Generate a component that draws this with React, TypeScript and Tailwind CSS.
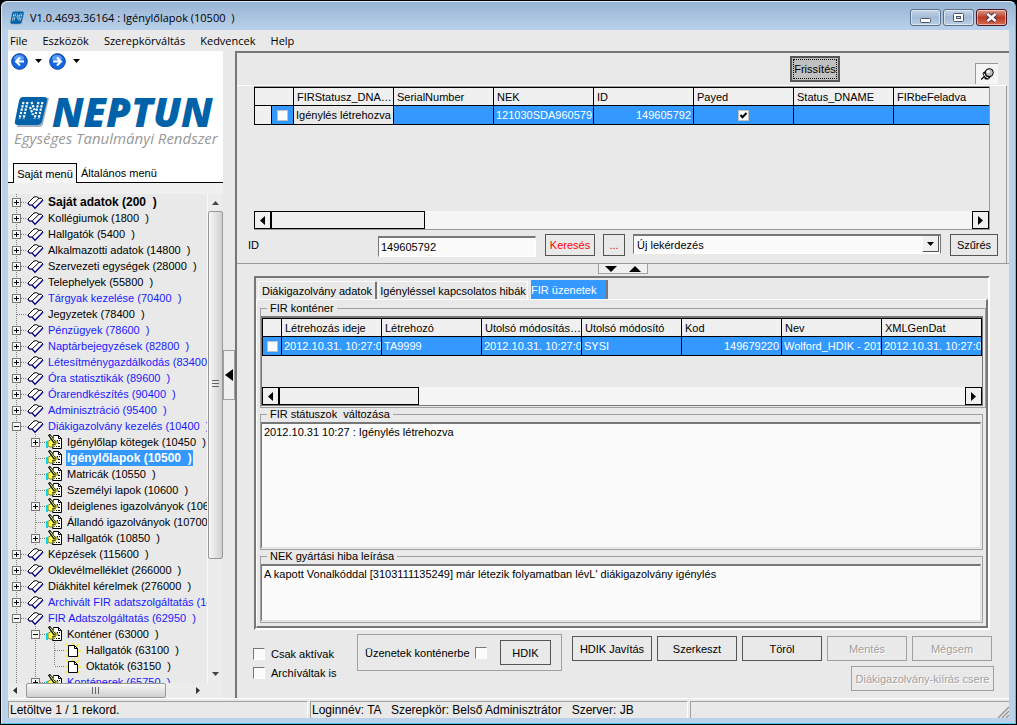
import React from 'react';
import { clsx } from 'clsx';

type Guide = 'line' | 'plus' | 'minus' | 'tee' | 'ell';
type NodeIcon = 'book' | 'form' | 'page';

interface TreeNode {
  guides: Guide[];
  icon: NodeIcon;
  label: string;
  blue?: boolean;
  bold?: boolean;
  selected?: boolean;
}

const TREE: TreeNode[] = [
  { guides: ['plus'], icon: 'book', label: 'Saját adatok (200  )', bold: true },
  { guides: ['plus'], icon: 'book', label: 'Kollégiumok (1800  )' },
  { guides: ['plus'], icon: 'book', label: 'Hallgatók (5400  )' },
  { guides: ['plus'], icon: 'book', label: 'Alkalmazotti adatok (14800  )' },
  { guides: ['plus'], icon: 'book', label: 'Szervezeti egységek (28000  )' },
  { guides: ['plus'], icon: 'book', label: 'Telephelyek (55800  )' },
  { guides: ['plus'], icon: 'book', label: 'Tárgyak kezelése (70400  )', blue: true },
  { guides: ['tee'], icon: 'book', label: 'Jegyzetek (78400  )' },
  { guides: ['plus'], icon: 'book', label: 'Pénzügyek (78600  )', blue: true },
  { guides: ['plus'], icon: 'book', label: 'Naptárbejegyzések (82800  )', blue: true },
  { guides: ['plus'], icon: 'book', label: 'Létesítménygazdálkodás (83400', blue: true },
  { guides: ['plus'], icon: 'book', label: 'Óra statisztikák (89600  )', blue: true },
  { guides: ['plus'], icon: 'book', label: 'Órarendkészítés (90400  )', blue: true },
  { guides: ['plus'], icon: 'book', label: 'Adminisztráció (95400  )', blue: true },
  { guides: ['minus'], icon: 'book', label: 'Diákigazolvány kezelés (10400  )', blue: true },
  { guides: ['line', 'plus'], icon: 'form', label: 'Igénylőlap kötegek (10450  )' },
  { guides: ['line', 'tee'], icon: 'form', label: 'Igénylőlapok (10500  )', bold: true, selected: true },
  { guides: ['line', 'tee'], icon: 'form', label: 'Matricák (10550  )' },
  { guides: ['line', 'tee'], icon: 'form', label: 'Személyi lapok (10600  )' },
  { guides: ['line', 'plus'], icon: 'form', label: 'Ideiglenes igazolványok (10650  )' },
  { guides: ['line', 'tee'], icon: 'form', label: 'Állandó igazolványok (10700' },
  { guides: ['line', 'plus'], icon: 'form', label: 'Hallgatók (10850  )' },
  { guides: ['plus'], icon: 'book', label: 'Képzések (115600  )' },
  { guides: ['plus'], icon: 'book', label: 'Oklevélmelléklet (266000  )' },
  { guides: ['plus'], icon: 'book', label: 'Diákhitel kérelmek (276000  )' },
  { guides: ['plus'], icon: 'book', label: 'Archivált FIR adatszolgáltatás (14', blue: true },
  { guides: ['minus'], icon: 'book', label: 'FIR Adatszolgáltatás (62950  )', blue: true },
  { guides: ['line', 'minus'], icon: 'form', label: 'Konténer (63000  )' },
  { guides: ['line', 'line', 'tee'], icon: 'page', label: 'Hallgatók (63100  )' },
  { guides: ['line', 'line', 'ell'], icon: 'page', label: 'Oktatók (63150  )' },
  { guides: ['line', 'plus'], icon: 'form', label: 'Konténerek (65750  )', blue: true },
];

export default function App() {
  return (
    <div className="h-screen min-h-[640px] bg-black p-px font-['Liberation_Sans',Arial,sans-serif] text-[11px] leading-4 text-black">
      <div className="flex h-full flex-col rounded-t-md border border-[#4cc5e6] border-t-[#dce9f5] border-l-[#dce9f5] bg-[#b9d1ea] pb-[5px]">
        <TitleBar />
        <div className="mx-[6px] flex min-h-0 flex-1 flex-col bg-[#e9e9e9]">
          <MenuBar />
          <div className="flex min-h-0 flex-1">
            <Sidebar />
            <div className="flex w-3 shrink-0 items-center">
              <button type="button" aria-label="Panel elrejtése" className="flex h-[50px] w-3 items-center justify-center border border-[#a0a0a0] bg-[#f0f0f0]">
                <svg width="8" height="12" viewBox="0 0 8 12"><path d="M8 0v12L0 6z" /></svg>
              </button>
            </div>
            <Workspace />
          </div>
          <StatusBar />
        </div>
      </div>
    </div>
  );
}

function TitleBar() {
  return (
    <header className="flex h-7 shrink-0 items-center rounded-t-md bg-gradient-to-b from-[#98b4d4] to-[#b9d1ea] pt-[3px] pr-2 pl-2">
      <LogoMark className="h-[14px] w-[15px]" />
      <h1 className="ml-[5px] font-['Open_Sans',sans-serif] text-[11px] whitespace-pre">V1.0.4693.36164 : Igénylőlapok (10500  )</h1>
      <div className="ml-auto flex gap-[2px]">
        <WindowButton label="Kis méret">
          <rect x="9.5" y="8.5" width="10" height="4" rx="1" fill="#fff" stroke="#4b5566" />
        </WindowButton>
        <WindowButton label="Teljes méret">
          <rect x="9.5" y="3.5" width="10" height="8" rx="1" fill="#fff" stroke="#4b5566" />
          <rect x="12.5" y="6.5" width="4" height="2" fill="#b9d1ea" stroke="#4b5566" />
        </WindowButton>
        <WindowButton label="Bezárás" close>
          <path d="M10.5 4l8 7m0-7l-8 7" stroke="#4b2a35" strokeWidth="4.5" />
          <path d="M10.5 4l8 7m0-7l-8 7" stroke="#fff" strokeWidth="2.6" />
        </WindowButton>
      </div>
    </header>
  );
}

function WindowButton({ label, close, children }: { label: string; close?: boolean; children: React.ReactNode }) {
  return (
    <button
      type="button"
      aria-label={label}
      className={clsx(
        'h-[17px] w-[31px] rounded-[3px] border shadow-[inset_0_0_0_1px_rgba(255,255,255,0.5)]',
        close
          ? 'border-[#4a1420] bg-gradient-to-b from-[#dc9a8c] via-[#b83a24] to-[#d46a50]'
          : 'border-[#5d6f86] bg-gradient-to-b from-[#c3d4e8] via-[#a4bbd6] to-[#bcd0e6]',
      )}
    >
      <svg width="29" height="15" viewBox="0 0 29 15" fill="none">{children}</svg>
    </button>
  );
}

function MenuBar() {
  return (
    <nav className="flex h-[21px] shrink-0 items-center gap-[15px] pl-[2px] font-['Open_Sans',sans-serif] text-[11px]">
      {['File', 'Eszközök', 'Szerepkörváltás', 'Kedvencek', 'Help'].map((item) => (
        <button type="button" key={item}>{item}</button>
      ))}
    </nav>
  );
}

/* ---------- left side ---------- */

function Sidebar() {
  return (
    <aside className="flex w-[215px] shrink-0 flex-col bg-[#f0f0f0]">
      <div className="bg-white">
        <div className="flex h-5 items-center pl-[3px]">
          <NavButton label="Vissza" arrow="M9 4.5L5 8.5l4 4M5 8.5h8" />
          <NavButton label="Előre" arrow="M8 4.5l4 4-4 4M12 8.5H4" />
        </div>
        <div className="pt-[23px] pl-[6px]">
          <div className="flex h-9 items-center">
            <LogoMark className="h-8 w-9" />
            <span className="ml-[2px] font-['Open_Sans',sans-serif] text-[40px] leading-9 font-extrabold text-[#0062a8] italic">NEPTUN</span>
          </div>
          <p className="font-['Open_Sans',sans-serif] text-[15px] leading-4 whitespace-nowrap text-[#999] italic">Egységes Tanulmányi Rendszer</p>
        </div>
        <div role="tablist" className="mt-[17px] flex h-5 items-end">
          <span className="w-[5px] border-b border-black" />
          <button type="button" role="tab" aria-selected="true" className="h-5 w-16 border border-b-0 border-black bg-[#f5f5f5]">Saját menü</button>
          <button type="button" role="tab" aria-selected="false" className="h-5 flex-1 border-b border-black pl-1 text-left">Általános menü</button>
        </div>
      </div>
      <div className="mt-[11px] flex min-h-0 flex-1 bg-[#e9e9e9]">
        <ul className="min-w-0 flex-1 overflow-hidden">
          {TREE.map((node) => (
            <TreeRow key={node.label} node={node} />
          ))}
        </ul>
        <div className="flex w-4 shrink-0 flex-col items-center border-l border-[#f8f8f8] bg-[#ececec]">
          <svg width="7" height="17" viewBox="0 0 7 17"><path d="M0 11h7L3.500 7z" fill="#444" /></svg>
          <div className="flex w-[15px] flex-[345] items-center justify-center rounded-[2px] border border-[#999] bg-gradient-to-r from-[#f8f8f8] to-[#cfcfcf]">
            <svg width="7" height="9" viewBox="0 0 7 9"><path d="M0 .5h7M0 3.500h7M0 6.500h7" stroke="#666" /></svg>
          </div>
          <div className="flex-[107]" />
          <svg width="7" height="17" viewBox="0 0 7 17"><path d="M0 6h7L3.500 10z" fill="#444" /></svg>
        </div>
      </div>
      <div className="flex h-[15px] shrink-0 items-center bg-[#ececec] pr-4">
        <svg width="18" height="15" viewBox="0 0 18 15"><path d="M9 4v7L5 7.500z" fill="#333" /></svg>
        <div className="flex h-[15px] flex-[140] items-center justify-center rounded-[2px] border border-[#999] bg-gradient-to-b from-[#f8f8f8] to-[#cfcfcf]">
          <svg width="9" height="7" viewBox="0 0 9 7"><path d="M.5 0v7M3.500 0v7M6.500 0v7" stroke="#666" /></svg>
        </div>
        <div className="flex-[24]" />
        <svg width="17" height="15" viewBox="0 0 17 15"><path d="M6 4v7l4-3.500z" fill="#333" /></svg>
      </div>
    </aside>
  );
}

function NavButton({ label, arrow }: { label: string; arrow: string }) {
  return (
    <button type="button" aria-label={label} className="flex w-[38px] items-center gap-[7px]">
      <svg width="17" height="17" viewBox="0 0 17 17" fill="none">
        <circle cx="8.500" cy="8.500" r="7.800" fill="#1568e0" stroke="#0b3d9c" />
        <ellipse cx="8" cy="5" rx="5" ry="3" fill="#5a9cf5" />
        <path d={arrow} stroke="#fff" strokeWidth="2" />
      </svg>
      <svg width="7" height="4" viewBox="0 0 7 4"><path d="M0 0h7L3.500 4z" /></svg>
    </button>
  );
}

function TreeRow({ node }: { node: TreeNode }) {
  return (
    <li className="flex h-4 items-center whitespace-pre">
      {node.guides.map((guide, i) => (
        <TreeGuide key={i} kind={guide} />
      ))}
      <span className="flex w-5 shrink-0 items-center">
        {node.icon === 'book' && <BookIcon />}
        {node.icon === 'form' && <FormIcon />}
        {node.icon === 'page' && <PageIcon />}
      </span>
      <span
        className={clsx(
          'h-4 px-px',
          node.bold && 'text-[12px] font-bold',
          node.selected && 'bg-[#3399ff] text-white',
          node.blue && 'text-[#1a1aff]',
        )}
      >
        {node.label}
      </span>
    </li>
  );
}

function TreeGuide({ kind }: { kind: Guide }) {
  const box = kind === 'plus' || kind === 'minus';
  return (
    <svg width="19" height="16" viewBox="0 0 19 16" className="shrink-0" fill="none">
      <path d={kind === 'ell' ? 'M8.500 0v8' : 'M8.500 0v16'} stroke="#808080" strokeDasharray="1 1" />
      {kind !== 'line' && <path d="M9 8.500h10" stroke="#808080" strokeDasharray="1 1" />}
      {box && <rect x="4.500" y="4.500" width="8" height="8" fill="#f5f5f5" stroke="#777" />}
      {box && <path d="M6 8.500h5" stroke="#000" />}
      {kind === 'plus' && <path d="M8.500 6v5" stroke="#000" />}
    </svg>
  );
}

function BookIcon() {
  return (
    <svg width="17" height="15" viewBox="0 0 17 15" fill="none">
      <path d="M7 2L.8 8.200l2 1.600h2.400l2.600 3.200L16 5l-1.800-1.800h-2L9.700 1.800z" fill="#fff" />
      <path d="M.8 8.200L7 2l2.700-.3L12 3.300h2.200L16 5" stroke="#000" />
      <path d="M12 3.300L5.200 10" stroke="#000" />
      <path d="M.8 8.200l2 2h2.400l2.800 3L16 5" stroke="#000080" strokeWidth="1.300" />
    </svg>
  );
}

function FormIcon() {
  return (
    <svg width="17" height="16" viewBox="0 0 17 16" fill="none">
      <path d="M7.500 1.500h5l3 3v10h-9v-9z" fill="#fff" stroke="#000" />
      <path d="M12.500 1.500v3h3" stroke="#000" />
      <path d="M11 6.500h1m1 0h1M12 9.500h2M10 12.500h1m1 0h2" stroke="#000" />
      <path d="M2 7.500l3-2 2 1 5 1v1.500H9l1 1-1 1.500-1 1.500H4l-2-1z" fill="#ffff55" stroke="#6b6b10" strokeWidth=".8" />
      <path d="M3 .5l6 8.500" stroke="#000" strokeWidth="2.600" />
      <path d="M4 1.500l5 7" stroke="#ffff55" />
      <path d="M6 10.500h3M6 12h2" stroke="#000" strokeWidth=".7" />
      <path d="M1 7v7" stroke="#00d8e8" strokeWidth="2" />
    </svg>
  );
}

function PageIcon() {
  return (
    <svg width="17" height="15" viewBox="0 0 17 15" fill="none">
      <path d="M1 1l4 4M14 1l-3 3M1 14l4-4M14 14l-3-3M0 8h3M13 8h3M8 0v3" stroke="#f5ee30" strokeWidth="1.500" />
      <path d="M3.500 2.500h6l3 3v8h-9z" fill="#fff" stroke="#000" />
      <path d="M9.500 2.500v3h3" stroke="#000" />
    </svg>
  );
}

function LogoMark({ className }: { className: string }) {
  return (
    <svg viewBox="0 0 36 32" className={className} preserveAspectRatio="none">
      <path d="M10 2h25l-6 26q-1 3-4 3H3z" fill="#9fb0c0" />
      <path d="M9 1h21q4 0 3 4l-5 20q-1 4-5 4H4q-4 0-3-4L5 5q1-4 4-4z" fill="#0062a8" />
      <path
        d="M9.500 6L5.500 23M13.500 6L9.500 23M16 11l3 8M17.500 6l3 8M24.500 6l-4 17M28.500 6l-4 17"
        stroke="#fff"
        strokeWidth="2.200"
        strokeDasharray="2.200 1.200"
        fill="none"
      />
    </svg>
  );
}

/* ---------- right side ---------- */

const BUTTON = 'border border-[#555] bg-[#e9e9e9] disabled:border-[#a0a0a0] disabled:text-[#a0a0a0] disabled:[text-shadow:1px_1px_0_#fff]';

function Workspace() {
  return (
    <main className="flex min-w-0 flex-1 flex-col border-t-2 border-l-2 border-[#777]">
      <div className="flex h-[211px] shrink-0 flex-col border-b border-[#999]">
        <div className="mr-[2px] flex h-8 shrink-0 items-start justify-end gap-[135px] pt-[3px] pr-[9px]">
          <button type="button" className="h-[26px] w-[50px] border-2 border-[#555] bg-[#c0c0c0] p-px">
            <span className="flex h-full items-center justify-center outline-1 -outline-offset-1 outline-dotted outline-black">Frissítés</span>
          </button>
          <button type="button" aria-label="Rögzítés" className="mt-[7px] flex h-[21px] w-[23px] items-center justify-center border-t border-l border-[#999] bg-[#f5f5f5]">
            <svg width="13" height="12" viewBox="0 0 13 12">
              <path d="M0 11.500l4-3.500" stroke="#000" strokeWidth="1.200" />
              <path d="M1.500 5l4-3 6 5-4 4.500H4z" fill="#000" />
              <circle cx="8.300" cy="4.600" r="4" fill="#bbb" stroke="#000" />
              <path d="M3 5.500q.5 4 4.500 4.500" stroke="#fff" fill="none" />
              <circle cx="7.300" cy="3.500" r="1.500" fill="#fff" />
            </svg>
          </button>
        </div>
        <div className="mr-[2px] flex min-h-0 flex-1 flex-col border-t border-r border-t-white border-r-[#999]">
          <div className="mr-4 ml-[17px] flex min-h-0 flex-1 flex-col border border-[#999] border-l-0">
            <div className="min-h-0 flex-1 overflow-hidden"><RequestTable /></div>
            <GridScrollbar thumb="w-[154px]" />
          </div>
          <div className="flex h-[33px] shrink-0 items-start pt-1 pr-2 pl-[11px]">
            <label htmlFor="search-id" className="w-[130px] leading-[22px]">ID</label>
            <input
              id="search-id"
              defaultValue="149605792"
              className="mt-[2px] h-[21px] w-[158px] border border-t-2 border-[#777] border-r-white border-b-white bg-[#fbfbfb] px-[2px]"
            />
            <button type="button" className={clsx(BUTTON, 'ml-[9px] h-[22px] w-[50px] text-[#ff0000]')}>Keresés</button>
            <button type="button" className={clsx(BUTTON, 'ml-2 h-[22px] w-[22px] text-[#ff0000]')}>...</button>
            <div className="relative ml-2 min-w-0 flex-1">
              <select
                aria-label="Lekérdezés"
                className="h-5 w-full appearance-none border border-t-2 border-[#777] border-b-white bg-[#fbfbfb] px-[3px]"
              >
                <option>Új lekérdezés</option>
              </select>
              <span className="pointer-events-none absolute top-[2px] right-[2px] flex h-4 w-4 items-center justify-center border-r border-b border-[#555] bg-[#f0f0f0]">
                <svg width="7" height="4" viewBox="0 0 7 4"><path d="M0 0h7L3.500 4z" /></svg>
              </span>
            </div>
            <button type="button" className={clsx(BUTTON, 'ml-[9px] h-[22px] w-12')}>Szűrés</button>
          </div>
        </div>
      </div>

      <div className="flex h-3 shrink-0 justify-center">
        <div className="flex h-[10px] w-[50px] items-center justify-around border border-t-0 border-[#a0a0a0] bg-[#f0f0f0]">
          <button type="button" aria-label="Le"><svg width="12" height="6" viewBox="0 0 12 6" className="block"><path d="M0 0h12L6 6z" /></svg></button>
          <button type="button" aria-label="Fel"><svg width="12" height="6" viewBox="0 0 12 6" className="block"><path d="M0 6h12L6 0z" /></svg></button>
        </div>
      </div>

      <DetailTabs />
      <ActionBar />
    </main>
  );
}

const HEAD = 'h-[18px] overflow-hidden border-r border-b border-black bg-[#f0f0f0] py-0 pr-0 pl-[3px] text-left font-normal text-ellipsis whitespace-nowrap';
const CELL = 'h-[19px] overflow-hidden border-r border-b border-black bg-[#3399ff] px-[2px] py-0 whitespace-nowrap text-white';

function RequestTable() {
  return (
    <table className="w-[740px] table-fixed border-separate border-spacing-0 border-t border-l border-black leading-[14px]">
      <colgroup>
        <col className="w-[17px]" />
        <col className="w-[22px]" />
      </colgroup>
      <thead>
        <tr>
          <th colSpan={2} className={HEAD} />
          {['FIRStatusz_DNAME', 'SerialNumber', 'NEK', 'ID', 'Payed', 'Status_DNAME', 'FIRbeFeladva'].map((name) => (
            <th key={name} className={HEAD}>{name}</th>
          ))}
        </tr>
      </thead>
      <tbody>
        <tr>
          <td className="border-r border-b border-black bg-[#f0f0f0] p-0" />
          <td className={CELL}><Check label="Sor kijelölése" flat /></td>
          <td className="h-[19px] border-r border-b border-black px-[2px] py-0 whitespace-nowrap">Igénylés létrehozva</td>
          <td className={CELL} />
          <td className={CELL}>121030SDA960579</td>
          <td className={clsx(CELL, 'text-right')}>149605792</td>
          <td className={CELL}><Check label="Payed" flat checked /></td>
          <td className={CELL} />
          <td className={CELL} />
        </tr>
      </tbody>
    </table>
  );
}

function ContainerTable() {
  return (
    <table className="w-[720px] table-fixed border-separate border-spacing-0 border-t border-l border-black leading-[14px]">
      <colgroup>
        <col className="w-[19px]" />
      </colgroup>
      <thead>
        <tr>
          <th className={HEAD} />
          {['Létrehozás ideje', 'Létrehozó', 'Utolsó módosítás ...', 'Utolsó módosító', 'Kod', 'Nev', 'XMLGenDat'].map((name) => (
            <th key={name} className={HEAD}>{name}</th>
          ))}
        </tr>
      </thead>
      <tbody>
        <tr>
          <td className={CELL}><Check label="Sor kijelölése" flat /></td>
          <td className={CELL}>2012.10.31. 10:27:0</td>
          <td className={CELL}>TA9999</td>
          <td className={CELL}>2012.10.31. 10:27:0</td>
          <td className={CELL}>SYSI</td>
          <td className={clsx(CELL, 'text-right')}>149679220</td>
          <td className={CELL}>Wolford_HDIK - 201</td>
          <td className={CELL}>2012.10.31. 10:27:0</td>
        </tr>
      </tbody>
    </table>
  );
}

function GridScrollbar({ thumb }: { thumb: string }) {
  return (
    <div className="flex h-[18px] shrink-0 bg-[#f5f5f5]">
      <button type="button" aria-label="Balra" className="flex w-[17px] items-center justify-center border border-black bg-[#f0f0f0]">
        <svg width="5" height="9" viewBox="0 0 5 9"><path d="M5 0v9L0 4.500z" /></svg>
      </button>
      <div className={clsx('border border-black bg-[#f0f0f0]', thumb)} />
      <button type="button" aria-label="Jobbra" className="ml-auto flex w-[17px] items-center justify-center border border-black bg-[#f0f0f0]">
        <svg width="5" height="9" viewBox="0 0 5 9"><path d="M0 0v9l5-4.500z" /></svg>
      </button>
    </div>
  );
}

function Check({ label, id, checked, flat }: { label?: string; id?: string; checked?: boolean; flat?: boolean }) {
  return (
    <span className={clsx('relative block shrink-0', flat ? 'mx-auto h-[11px] w-[11px]' : 'h-3 w-3')}>
      <input
        type="checkbox"
        id={id}
        aria-label={label}
        defaultChecked={checked}
        className={clsx(
          'peer block h-full w-full appearance-none bg-[#fbfbfb]',
          flat ? 'border border-[#c0c0c0]' : 'border border-[#777] border-r-white border-b-white',
        )}
      />
      <svg viewBox="0 0 11 11" className="pointer-events-none absolute inset-0 hidden peer-checked:block">
        <path d="M2.500 5l2 2.200L8.500 3" stroke="#000" strokeWidth="2" fill="none" />
      </svg>
    </span>
  );
}

function DetailTabs() {
  return (
    <div className="mr-[19px] ml-[17px] flex min-h-0 flex-1 flex-col border-2 border-[#777] border-r-white border-b-white pt-[2px]">
      <div role="tablist" className="flex h-[19px] shrink-0 items-end pl-[2px]">
        <button type="button" role="tab" aria-selected="false" className="h-[18px] w-[119px] rounded-t-xs border-t border-r-2 border-l border-t-white border-r-[#777] border-l-white pt-px">Diákigazolvány adatok</button>
        <button type="button" role="tab" aria-selected="false" className="ml-px h-[18px] w-[150px] rounded-t-xs border-t border-r border-l border-white pt-px">Igényléssel kapcsolatos hibák</button>
        <button type="button" role="tab" aria-selected="true" className="ml-[3px] h-[19px] w-[77px] border-r-2 border-[#777] bg-[#3399ff] text-left text-white">FIR üzenetek</button>
      </div>
      <div className="flex min-h-0 flex-1 flex-col border-t border-r-2 border-b-2 border-l border-[#777] border-t-white border-l-white px-[3px] pt-[2px] pb-[3px]">
        <Group title="FIR konténer" className="h-[106px] shrink-0">
          <div className="mr-px flex min-h-0 flex-1 flex-col border border-t-2 border-[#777]">
            <div className="min-h-0 flex-1 overflow-hidden"><ContainerTable /></div>
            <GridScrollbar thumb="w-[140px]" />
          </div>
        </Group>
        <Group title="FIR státuszok  változása" className="flex-1">
          <Memo label="FIR státuszok változása" value="2012.10.31 10:27 : Igénylés létrehozva" />
        </Group>
        <Group title="NEK gyártási hiba leírása" className="h-[73px] shrink-0">
          <Memo label="NEK gyártási hiba leírása" value="A kapott Vonalkóddal [3103111135249] már létezik folyamatban lévL' diákigazolvány igénylés" />
        </Group>
      </div>
    </div>
  );
}

function Group({ title, className, children }: { title: string; className: string; children: React.ReactNode }) {
  return (
    <fieldset className={clsx('flex min-h-0 flex-col border border-[#a0a0a0] pt-px pr-px pb-px', className)}>
      <legend className="ml-[6px] px-[3px] leading-[13px] whitespace-pre">{title}</legend>
      {children}
    </fieldset>
  );
}

function Memo({ label, value }: { label: string; value: string }) {
  return (
    <textarea
      aria-label={label}
      defaultValue={value}
      className="block min-h-0 w-full flex-1 resize-none border border-t-2 border-[#777] border-r-[#e0e0e0] border-b-[#e0e0e0] bg-[#fbfbfb] px-[2px]"
    />
  );
}

function ActionBar() {
  return (
    <div className="flex h-[68px] shrink-0 items-start pr-[15px] pl-4">
      <div className="flex w-[104px] shrink-0 flex-col gap-[3px] pt-4">
        <div className="flex items-center gap-[6px]">
          <Check id="only-active" />
          <label htmlFor="only-active">Csak aktívak</label>
        </div>
        <div className="flex items-center gap-[6px]">
          <Check id="archived" />
          <label htmlFor="archived">Archíváltak is</label>
        </div>
      </div>
      <div className="mt-1 flex h-[37px] w-[205px] shrink-0 items-center border border-[#a0a0a0] px-[7px]">
        <label htmlFor="to-container" className="w-[110px]">Üzenetek konténerbe</label>
        <Check id="to-container" />
        <button type="button" className={clsx(BUTTON, 'ml-[13px] h-[25px] w-[51px]')}>HDIK</button>
      </div>
      <div className="ml-auto flex flex-col items-end gap-[5px] pt-[6px]">
        <div className="mr-[2px] flex gap-[5px]">
          <button type="button" className={clsx(BUTTON, 'h-[25px] w-20')}>HDIK Javítás</button>
          <button type="button" className={clsx(BUTTON, 'h-[25px] w-20')}>Szerkeszt</button>
          <button type="button" className={clsx(BUTTON, 'h-[25px] w-20')}>Töröl</button>
          <button type="button" disabled className={clsx(BUTTON, 'h-[25px] w-20')}>Mentés</button>
          <button type="button" disabled className={clsx(BUTTON, 'h-[25px] w-20')}>Mégsem</button>
        </div>
        <button type="button" disabled className={clsx(BUTTON, 'h-[25px] w-[143px]')}>Diákigazolvány-kiírás csere</button>
      </div>
    </div>
  );
}

function StatusBar() {
  return (
    <footer className="flex h-5 shrink-0 gap-[2px] border-t border-white pt-[2px] text-[12px] whitespace-pre">
      <div className="w-[300px] border-t border-r border-l border-[#a0a0a0] border-r-white px-px">Letöltve 1 / 1 rekord.</div>
      <div className="w-[378px] border-t border-r border-l border-[#a0a0a0] border-r-white px-px">Loginnév: TA   Szerepkör: Belső Adminisztrátor   Szerver: JB</div>
      <div className="flex flex-1 items-end justify-end border-t border-l border-[#a0a0a0]">
        <svg width="12" height="12" viewBox="0 0 12 12"><path d="M1 12L12 1M5 12l7-7M9 12l3-3" stroke="#999" strokeWidth="1.500" /></svg>
      </div>
    </footer>
  );
}
